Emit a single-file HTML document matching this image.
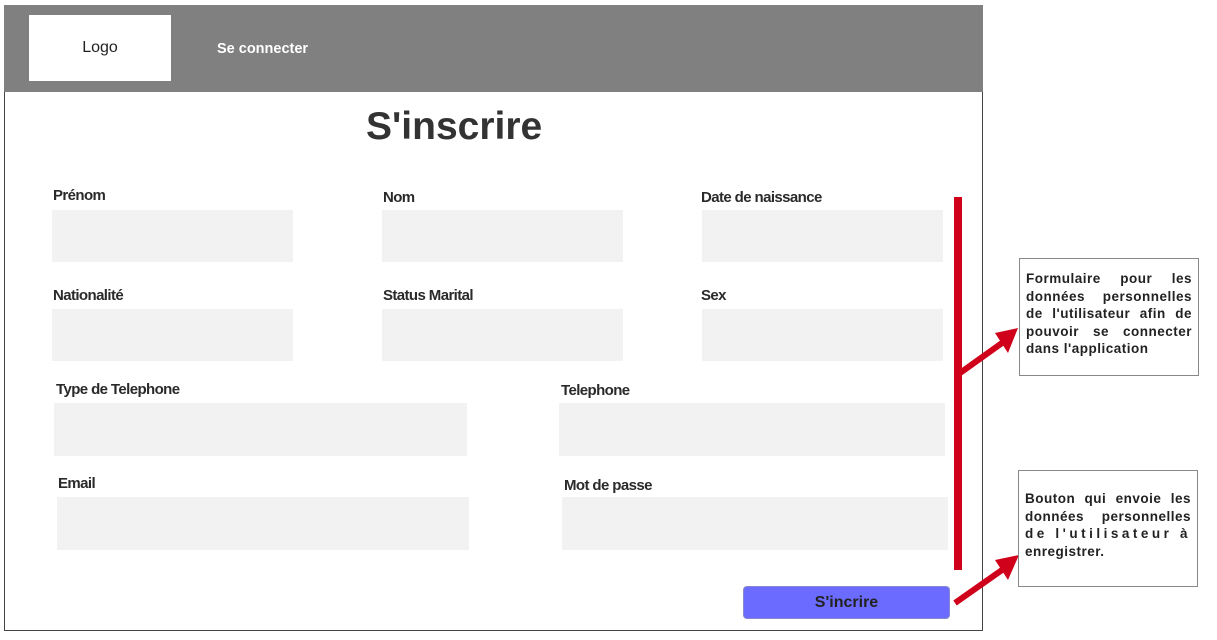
<!DOCTYPE html>
<html><head><meta charset="utf-8"><style>
*{margin:0;padding:0;box-sizing:border-box}
body{width:1217px;height:640px;background:#fff;position:relative;font-family:"Liberation Sans",Arial,sans-serif;overflow:hidden}
.a{position:absolute}
.frame{left:4px;top:5px;width:979px;height:626px;border:1px solid #444;border-top:none}
.hdr{left:4px;top:5px;width:979px;height:87px;background:#808080}
.logo{left:29px;top:15px;width:142px;height:66px;background:#fff;font-size:16px;color:#222;display:flex;align-items:center;justify-content:center}
.lbl{font-weight:bold;font-size:15px;color:#2a2a2a;letter-spacing:-0.6px}
.in{background:#f2f2f2}
.note{background:#fff;border:1px solid #888;font-weight:bold;font-size:13.5px;color:#222;line-height:17.5px;padding:0 6px}
.note div{text-align:justify;text-align-last:justify;white-space:nowrap;letter-spacing:0.5px}
.note div.l{text-align-last:left}
</style></head><body>
<div class="a frame"></div>
<div class="a hdr"></div>
<div class="a logo">Logo</div>
<div class="a" style="left:217px;top:41px;color:#fff;font-weight:bold;font-size:14.5px">Se connecter</div>
<div class="a" style="left:366px;top:105px;font-weight:bold;font-size:39px;color:#333">S'inscrire</div>

<div class="a lbl" style="left:53px;top:187px">Prénom</div>
<div class="a in" style="left:52px;top:210px;width:241px;height:52px"></div>
<div class="a lbl" style="left:383px;top:189px">Nom</div>
<div class="a in" style="left:382px;top:210px;width:241px;height:52px"></div>
<div class="a lbl" style="left:701px;top:189px">Date de naissance</div>
<div class="a in" style="left:702px;top:210px;width:241px;height:52px"></div>

<div class="a lbl" style="left:53px;top:287px">Nationalité</div>
<div class="a in" style="left:52px;top:309px;width:241px;height:52px"></div>
<div class="a lbl" style="left:383px;top:287px">Status Marital</div>
<div class="a in" style="left:382px;top:309px;width:241px;height:52px"></div>
<div class="a lbl" style="left:701px;top:287px">Sex</div>
<div class="a in" style="left:702px;top:309px;width:241px;height:52px"></div>

<div class="a lbl" style="left:56px;top:381px">Type de Telephone</div>
<div class="a in" style="left:54px;top:403px;width:413px;height:53px"></div>
<div class="a lbl" style="left:561px;top:382px">Telephone</div>
<div class="a in" style="left:559px;top:403px;width:386px;height:53px"></div>

<div class="a lbl" style="left:58px;top:475px">Email</div>
<div class="a in" style="left:57px;top:497px;width:412px;height:53px"></div>
<div class="a lbl" style="left:564px;top:477px">Mot de passe</div>
<div class="a in" style="left:562px;top:497px;width:386px;height:53px"></div>

<div class="a" style="left:743px;top:586px;width:207px;height:33px;background:#6b6bff;border:1px solid #8888cc;border-radius:4px;color:#222;font-weight:bold;font-size:16px;display:flex;align-items:center;justify-content:center">S'incrire</div>

<svg class="a" style="left:0;top:0" width="1217" height="640">
<line x1="958" y1="197" x2="958" y2="570" stroke="#d0021b" stroke-width="8"/>
<line x1="960" y1="373" x2="1002" y2="343" stroke="#d0021b" stroke-width="6"/>
<polygon points="1018,328 995,333 1008,353" fill="#d0021b"/>
<line x1="955" y1="603" x2="1002" y2="570" stroke="#d0021b" stroke-width="6"/>
<polygon points="1019,555 995,560 1008,580" fill="#d0021b"/>
</svg>

<div class="a note" style="left:1019px;top:258px;width:180px;height:118px;padding-top:11px">
<div>Formulaire pour les</div><div>données personnelles</div><div>de l'utilisateur afin de</div><div>pouvoir se connecter</div><div class="l">dans l'application</div></div>
<div class="a note" style="left:1018px;top:470px;width:180px;height:117px;padding-top:19px">
<div>Bouton qui envoie les</div><div>données personnelles</div><div style="letter-spacing:3.5px">de l'utilisateur à</div><div class="l">enregistrer.</div></div>
</body></html>
